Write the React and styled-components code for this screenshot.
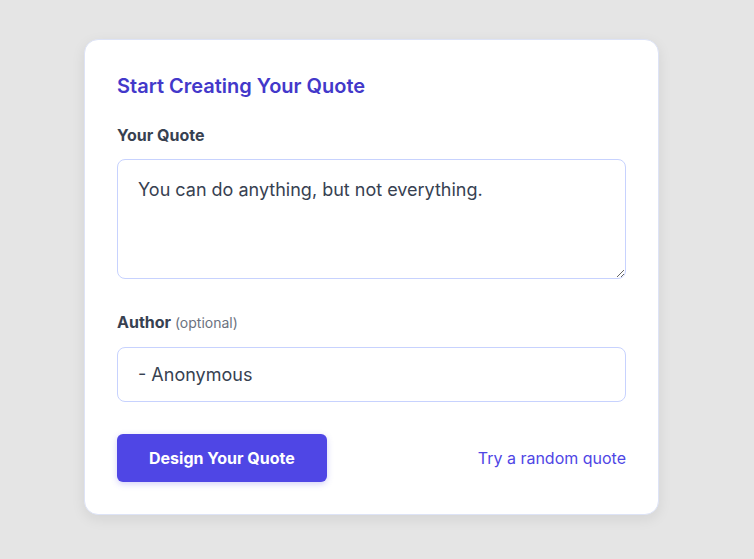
import React, { useState } from 'react'
import styled, { createGlobalStyle } from 'styled-components'

const GlobalStyle = createGlobalStyle`
  html, body {
    margin: 0;
    padding: 0;
    background: #e5e5e5;
    font-family: Inter, "Noto Sans", sans-serif;
  }
`

const Page = styled.div`
  min-height: 559px;
  padding: 39px 0 0 84px;
  box-sizing: border-box;
`

const Card = styled.div`
  width: 575px;
  box-sizing: border-box;
  background: #fff;
  border: 1px solid #dde3f6;
  border-radius: 14px;
  padding: 32px 32px 32px;
  box-shadow: 0 4px 14px rgba(0, 0, 0, 0.08);
`

const Title = styled.h2`
  margin: 0 0 25px;
  font-size: 20px;
  line-height: 28px;
  font-weight: 600;
  color: #4338ca;
`

const Field = styled.div`
  margin-bottom: ${p => p.$gap || 0}px;
`

const Label = styled.label`
  display: block;
  margin-bottom: 14px;
  font-size: 16px;
  line-height: 20px;
  font-weight: 700;
  color: #374151;
`

const Hint = styled.span`
  font-size: 14px;
  font-weight: 400;
  color: #6b7280;
`

const TextArea = styled.textarea`
  display: block;
  width: 100%;
  height: 120px;
  box-sizing: border-box;
  padding: 16px 20px;
  border: 1px solid #c7d2fe;
  border-radius: 8px;
  font-family: inherit;
  font-size: 18px;
  line-height: 27px;
  color: #374151;
  outline: none;
  resize: vertical;
`

const Input = styled.input`
  display: block;
  width: 100%;
  height: 55px;
  box-sizing: border-box;
  padding: 0 20px;
  border: 1px solid #c7d2fe;
  border-radius: 8px;
  font-family: inherit;
  font-size: 18px;
  color: #374151;
  outline: none;
`

const Actions = styled.div`
  display: flex;
  align-items: center;
  justify-content: space-between;
  margin-top: 32px;
`

const PrimaryButton = styled.button`
  height: 48px;
  padding: 0 32px;
  border: none;
  border-radius: 6px;
  background: #4f46e5;
  color: #fff;
  font-family: inherit;
  font-size: 16px;
  font-weight: 700;
  box-shadow: 0 2px 6px rgba(79, 70, 229, 0.25);
  cursor: pointer;
`

const LinkButton = styled.button`
  padding: 0;
  border: none;
  background: none;
  color: #4f46e5;
  font-family: inherit;
  font-size: 16px;
  font-weight: 400;
  cursor: pointer;
`

const App = () => {
  const [quote, setQuote] = useState('You can do anything, but not everything.')
  const [author, setAuthor] = useState('- Anonymous')

  return (
    <>
      <GlobalStyle />
      <Page>
        <Card>
          <Title>Start Creating Your Quote</Title>
          <Field $gap={33}>
            <Label htmlFor="quote">Your Quote</Label>
            <TextArea
              id="quote"
              value={quote}
              onChange={e => setQuote(e.target.value)}
            />
          </Field>
          <Field>
            <Label htmlFor="author">
              Author <Hint>(optional)</Hint>
            </Label>
            <Input
              id="author"
              value={author}
              onChange={e => setAuthor(e.target.value)}
            />
          </Field>
          <Actions>
            <PrimaryButton>Design Your Quote</PrimaryButton>
            <LinkButton>Try a random quote</LinkButton>
          </Actions>
        </Card>
      </Page>
    </>
  )
}

export default App
